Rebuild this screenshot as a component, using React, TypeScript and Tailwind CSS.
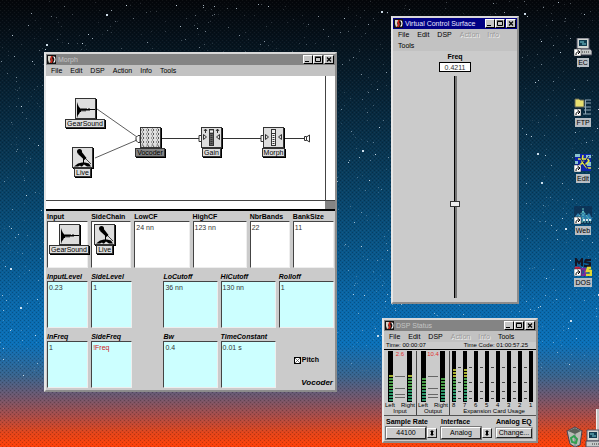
import { useState } from "react";
import type { ReactNode } from "react";

interface MenuItem {
  name: string;
  disabled?: boolean;
}

const morphMenu: MenuItem[] = [
  { name: "File" },
  { name: "Edit" },
  { name: "DSP" },
  { name: "Action" },
  { name: "Info" },
  { name: "Tools" },
];

const statusMenu: MenuItem[] = [
  { name: "File" },
  { name: "Edit" },
  { name: "DSP" },
  { name: "Action", disabled: true },
  { name: "Info", disabled: true },
  { name: "Tools" },
];

// Small seeded generator so the sky is the same on every load
function makeStars(count: number) {
  let seed = 4711;
  const next = () => {
    seed = (seed * 16807) % 2147483647;
    return seed / 2147483647;
  };
  return Array.from({ length: count }, () => {
    const x = next() * 100;
    const y = next() * 84;
    const bright = next();
    return { x, y, size: bright > 0.985 ? 2 : 1, opacity: 0.15 + bright * bright * bright * 0.8 };
  });
}

const stars = makeStars(1700);

function Sky() {
  return (
    <svg className="absolute inset-0 h-full w-full" aria-hidden="true" shapeRendering="crispEdges">
      <defs>
        <pattern id="dither" width="4" height="4" patternUnits="userSpaceOnUse">
          <path d="M0 0h1v1H0zM2 2h1v1H2z" fill="#000" opacity=".22" />
          <path d="M2 0h1v1H2zM0 2h1v1H0z" fill="#fff" opacity=".05" />
        </pattern>
      </defs>
      <rect width="100%" height="100%" fill="url(#dither)" />
      {stars.map((s, i) => (
        <rect key={i} x={`${s.x}%`} y={`${s.y}%`} width={s.size} height={s.size} fill="#d8e8f4" opacity={s.opacity} />
      ))}
    </svg>
  );
}

function AppIcon() {
  return (
    <svg width="9" height="9" viewBox="0 0 9 9" aria-hidden="true">
      <rect width="9" height="9" fill="#111" />
      <path d="M1 1h3v2l-1 1 1 3-2 1-1-3z" fill="#d8d4c8" />
      <path d="M4 1h2l-1 2 1 2-1 3H3l1-3-1-1z" fill="#c2281c" />
      <path d="M6.500 1.500c2 1 2 5 0 6" stroke="#fff" strokeWidth="1.200" fill="none" />
    </svg>
  );
}

function WindowButton({ label, children }: { label: string; children: ReactNode }) {
  return (
    <button
      type="button"
      aria-label={label}
      className="flex h-[9px] w-2.5 items-center justify-center border border-t-white border-l-white border-r-black border-b-black bg-[#c6c6c6]"
    >
      <svg width="8" height="7" viewBox="0 0 8 7" fill="none" stroke="#000" aria-hidden="true">
        {children}
      </svg>
    </button>
  );
}

function TitleBar({ title, active }: { title: string; active?: boolean }) {
  return (
    <header
      className={`flex h-[11px] items-center gap-0.5 px-px ${
        active ? "bg-[#000084] text-[#e8e8ff]" : "bg-[#848484] text-[#c4c4c4]"
      }`}
    >
      <AppIcon />
      <h2 className="flex-1 whitespace-nowrap text-[7px] leading-[11px]">{title}</h2>
      <div className="flex">
        <WindowButton label="Minimize">
          <path d="M1 5.500h4" />
        </WindowButton>
        <WindowButton label="Maximize">
          <path d="M1.500 1.500h5v4h-5zM1 1h6" />
        </WindowButton>
        <span className="w-px" />
        <WindowButton label="Close">
          <path d="M2 1.500l4 4M6 1.500l-4 4" strokeWidth="1.200" />
        </WindowButton>
      </div>
    </header>
  );
}

function MenuBar({ items }: { items: MenuItem[] }) {
  return (
    <nav className="flex flex-wrap gap-x-2 bg-[#c2c2c2] pl-[5px]">
      {items.map((item) => (
        <button
          key={item.name}
          type="button"
          disabled={item.disabled}
          className={`h-[11px] text-[7px] leading-[11px] ${
            item.disabled ? "text-[#9a9a9a] [text-shadow:1px_1px_0_#eeeeee]" : "text-black"
          }`}
        >
          {item.name}
        </button>
      ))}
    </nav>
  );
}

const frame =
  "absolute border-2 border-t-[#d8d8d8] border-l-[#e6e6e6] border-r-[#8c8c8c] border-b-[#8c8c8c] bg-[#cbcbcb]";

/* ---------- Sound glyphs ---------- */

function Glyph({ kind }: { kind: string }) {
  return (
    <svg width="21" height="21" viewBox="0 0 21 21" className="shadow-[1px_1px_0_#000]" aria-hidden="true">
      <rect x=".5" y=".5" width="20" height="20" fill="#dedede" stroke="#333" />
      {kind === "wave" && (
        <path
          d="M2 4l1 3 1 2 1 1 1 1 1-1 1 1 1-1 1 1 1-1 1 1 1 0 1-1 1 1h5v1h-5l-1 1-1-1-1 1-1-1-1 2-1-2-1 2-1-2-1 2-1 0-1 2-1 1-1 3z"
          fill="#000"
        />
      )}
      {kind === "mic" && (
        <g fill="#000">
          <circle cx="7.500" cy="4.500" r="2.500" />
          <path d="M6 7l3-3 5.500 7-2 2z" />
          <path d="M13 11l6 6" stroke="#000" strokeWidth=".700" />
          <path d="M11.500 11v5" stroke="#000" />
          <path d="M2 19.500l4-3 4-1h3l4 1 2 3h-4l-3-2-2 2H9l-1-1-2 1z" />
        </g>
      )}
      {kind === "bands" && (
        <g fill="none" stroke="#555">
          {[2, 7, 12, 17].map((x) => (
            <path key={x} d={`M${x} 1l2 2-2 2 2 2-2 2 2 2-2 2 2 2-2 2 2 3`} />
          ))}
          {[2, 7, 12, 17].map((x) => (
            <path key={x} d={`M${x + 1} 1l-2 2 2 2-2 2 2 2-2 2 2 2-2 2 2 2-2 3`} stroke="#999" />
          ))}
        </g>
      )}
      {(kind === "gain" || kind === "fader") && (
        <g fill="none" stroke="#333">
          <rect x="8.500" y="2.500" width="4" height="16" fill={kind === "gain" ? "#666" : "#f4f4f4"} />
          <path d="M9 4.500h3" stroke="#eee" strokeWidth="2" />
          <path d="M9 6.500h3" />
          <path d="M10.500 8v10" strokeDasharray="1 1" strokeWidth="2" />
          <path d="M2.500 7.500v5l3-2.500zM18.500 7.500v5l-3-2.500z" />
          {kind === "gain" && <path d="M4.500 6V2m-1.500 2l1.500-2L6 4M16.500 6V2M15 4l1.500-2L18 4" />}
        </g>
      )}
    </svg>
  );
}

function SoundNode({ kind, name, selected }: { kind: string; name: string; selected?: boolean }) {
  return (
    <figure className="flex flex-col items-center">
      <Glyph kind={kind} />
      <figcaption
        className={`h-[9px] border border-[#333] px-px text-[7px] leading-[7px] shadow-[1px_1px_0_#000] ${
          selected ? "bg-[#848484]" : "bg-[#dedede]"
        }`}
      >
        {name}
      </figcaption>
    </figure>
  );
}

const nodes = [
  { name: "GearSound", kind: "wave", place: "left-[20px] top-[22px] w-[38px]" },
  { name: "Live", kind: "mic", place: "left-[26px] top-[71px] w-[21px]" },
  { name: "Vocoder", kind: "bands", place: "left-[88px] top-[51px] w-[32px]", selected: true },
  { name: "Gain", kind: "gain", place: "left-[155px] top-[51px] w-[21px]" },
  { name: "Morph", kind: "fader", place: "left-[215px] top-[51px] w-[25px]" },
];

function SignalFlow() {
  return (
    <div className="relative h-full flex-1 bg-white">
      <svg width="278" height="124" className="absolute top-0 left-0" fill="none" stroke="#333" aria-hidden="true">
        <path d="M51 33L91 61M49 82L91 64" strokeWidth=".800" />
        <path d="M116 62.500h37M177 62.500h38M239 62.500h19" />
        <path d="M94 59.500h-2l-2 2v3l2 2h2zM155 59.500h-2v6h2M217 59.500h-2v6h2" />
        <path d="M258.500 60.500h2v4h-2zM260.500 61l3-2v7l-3-2" />
      </svg>
      {nodes.map((node) => (
        <div key={node.name} className={`absolute ${node.place}`}>
          <SoundNode kind={node.kind} name={node.name} selected={node.selected} />
        </div>
      ))}
    </div>
  );
}

/* ---------- Morph window ---------- */

interface FieldProps {
  name: string;
  value?: string;
  italic?: boolean;
  red?: boolean;
  children?: ReactNode;
}

const boxStyle =
  "block h-[47px] w-full border border-t-[#444] border-l-[#444] border-r-[#eee] border-b-[#eee]";

function Field({ name, value, italic, red, children }: FieldProps) {
  return (
    <div className="min-w-0">
      <label
        htmlFor={name}
        className={`block whitespace-nowrap text-[7px] leading-2 font-bold ${italic ? "italic" : ""}`}
      >
        {name}
      </label>
      {children ? (
        <div id={name} className={`${boxStyle} bg-white pt-0.5 pl-0.5`}>
          {children}
        </div>
      ) : (
        <textarea
          id={name}
          defaultValue={value}
          className={`${boxStyle} resize-none overflow-hidden pt-0.5 pl-px text-[7px] leading-2 outline-none ${
            italic ? "bg-[#ccffff]" : "bg-white"
          } ${red ? "text-[#d02020]" : "text-[#333]"}`}
        />
      )}
    </div>
  );
}

function MorphWindow() {
  return (
    <section className={`${frame} top-[52px] left-[44px] w-[293px]`}>
      <TitleBar title="Morph" />
      <MenuBar items={morphMenu} />
      <div className="flex h-[124px]">
        <SignalFlow />
        <div className="w-2.5 border-l border-[#444] bg-white" />
      </div>
      <div className="flex h-[9px] border-t border-[#444] bg-white">
        <div className="flex-1" />
        <div className="w-2.5 bg-[#848484]" />
      </div>
      <div className="h-0.5 bg-black" />

      <div className="flex flex-col gap-[5px] px-px py-0.5">
        <div className="grid grid-cols-[41fr_40fr_55fr_54fr_40fr_41fr] gap-[3px]">
          <Field name="Input">
            <div className="flex w-[38px] justify-center">
              <SoundNode kind="wave" name="GearSound" />
            </div>
          </Field>
          <Field name="SideChain">
            <div className="w-[21px]">
              <SoundNode kind="mic" name="Live" />
            </div>
          </Field>
          <Field name="LowCF" value="24 nn" />
          <Field name="HighCF" value="123 nn" />
          <Field name="NbrBands" value="22" />
          <Field name="BankSize" value="11" />
        </div>
        <div className="grid grid-cols-[41fr_41fr_25fr_54fr_55fr_55fr] gap-[3px]">
          <Field name="InputLevel" value="0.23" italic />
          <Field name="SideLevel" value="1" italic />
          <div />
          <Field name="LoCutoff" value="36 nn" italic />
          <Field name="HiCutoff" value="130 nn" italic />
          <Field name="Rolloff" value="1" italic />
        </div>
        <div className="grid grid-cols-[41fr_41fr_25fr_54fr_55fr_55fr] gap-[3px]">
          <Field name="InFreq" value="1" italic />
          <Field name="SideFreq" value="!Freq" italic red />
          <div />
          <Field name="Bw" value="0.4" italic />
          <Field name="TimeConstant" value="0.01 s" italic />
          <div className="flex flex-col justify-between pt-[23px]">
            <label className="flex items-center justify-center gap-px text-[7px] leading-2 font-bold">
              <span className="grid">
                <input
                  type="checkbox"
                  defaultChecked
                  className="peer col-start-1 row-start-1 size-[7px] appearance-none border border-black bg-white"
                />
                <svg
                  viewBox="0 0 7 7"
                  className="pointer-events-none invisible col-start-1 row-start-1 size-[7px] peer-checked:visible"
                  aria-hidden="true"
                >
                  <path d="M1 1l5 5M6 1L1 6" stroke="#444" strokeWidth=".700" />
                </svg>
              </span>
              Pitch
            </label>
            <p className="pr-px text-right text-[8px] leading-[10px] font-bold italic">Vocoder</p>
          </div>
        </div>
      </div>
    </section>
  );
}

/* ---------- Virtual Control Surface ---------- */

function ControlSurface() {
  const [freq, setFreq] = useState("0.4211");

  return (
    <section className={`${frame} top-[16px] left-[391px] w-[128px]`}>
      <TitleBar title="Virtual Control Surface" active />
      <MenuBar items={statusMenu} />
      <div className="flex flex-col items-center pt-px pb-1">
        <label htmlFor="freq-value" className="text-[7px] leading-[10px] font-bold">
          Freq
        </label>
        <input
          id="freq-value"
          value={freq}
          onChange={(e) => setFreq(e.target.value)}
          className="h-2.5 w-8 border border-black bg-white text-center text-[7px] leading-2 text-[#333] outline-none"
        />
        <input
          type="range"
          aria-label="Freq"
          min="0"
          max="1"
          step="0.0001"
          value={freq}
          onChange={(e) => setFreq(e.target.value)}
          className="mt-1 h-[222px] w-2.5 appearance-none bg-[linear-gradient(90deg,transparent_4px,#000_4px,#000_5px,#747474_5px,#747474_7px,transparent_7px)] [direction:rtl] [writing-mode:vertical-lr] [&::-webkit-slider-thumb]:h-1.5 [&::-webkit-slider-thumb]:w-2.5 [&::-webkit-slider-thumb]:appearance-none [&::-webkit-slider-thumb]:border [&::-webkit-slider-thumb]:border-[#333] [&::-webkit-slider-thumb]:bg-[#eeeeee]"
        />
      </div>
    </section>
  );
}

/* ---------- DSP Status ---------- */

function Meter({ x, level, width }: { x: number; level: number; width: number }) {
  const segments = Array.from({ length: Math.floor(level / 3) }, (_, i) => 48 - i * 3);
  return (
    <g>
      <rect x={x} width={width} height="51" fill="#000" />
      {segments.map((y) => (
        <rect key={y} x={x + 1} y={y} width={width - 1} height="2" fill={y < 27 ? "#a8b030" : y < 39 ? "#4a9c48" : "#2c9468"} />
      ))}
    </g>
  );
}

function LevelPanel({ name, peak, left, right }: { name: string; peak: string; left: number; right: number }) {
  return (
    <div className="w-[33px] border-r border-[#444] text-[6px]">
      <svg width="32" height="51" shapeRendering="crispEdges">
        <Meter x={4} level={left} width={5} />
        <Meter x={23} level={right} width={5} />
        <path d="M11 25.500h10M11 37.500h10M11 43.500h10M11 46.500h10" stroke="#666" />
        <text x="16" y="5" textAnchor="middle" fontSize="6" fill="#e03030">
          {peak}
        </text>
      </svg>
      <div className="flex justify-between px-px leading-[6px]">
        <span>Left</span>
        <span>Right</span>
      </div>
      <p className="text-center leading-[7px]">{name}</p>
    </div>
  );
}

const cards = [33, 33, 0, 0, 0, 0, 0, 0];

function Picker({ id, label, value }: { id: string; label: string; value: string }) {
  return (
    <div>
      <label htmlFor={id} className="block whitespace-nowrap text-[7px] leading-[10px] font-bold">
        {label}
      </label>
      <div className="flex items-center gap-px">
        <select
          id={id}
          className="h-3 w-10 appearance-none border border-t-white border-l-white border-r-[#222] border-b-[#222] bg-[#cbcbcb] text-center text-[7px] leading-[10px] shadow-[0_0_0_1px_#777] outline-none"
        >
          <option>{value}</option>
        </select>
        <span className="flex size-2.5 items-center justify-center border border-t-white border-l-white border-r-[#222] border-b-[#222]">
          <svg width="6" height="6" viewBox="0 0 6 6" aria-hidden="true">
            <path d="M3 0l2 2H4v2h1L3 6 1 4h1V2H1z" />
          </svg>
        </span>
      </div>
    </div>
  );
}

function StatusWindow() {
  return (
    <section className={`${frame} top-[318px] left-[382px] w-[156px]`}>
      <TitleBar title="DSP Status" />
      <MenuBar items={statusMenu} />
      <div className="flex h-2 justify-between border-b border-black pr-2 pl-0.5 text-[6px] leading-[7px]">
        <span>Time: 00:00:07</span>
        <span>Time Code: 01:00:57.25</span>
      </div>
      <div className="flex border-b border-[#555] pt-px">
        <LevelPanel name="Input" peak="2.6" left={27} right={27} />
        <LevelPanel name="Output" peak="10.4" left={24} right={24} />
        <div className="flex-1 text-[6px]">
          <svg width="86" height="51" shapeRendering="crispEdges">
            {cards.map((level, i) => (
              <Meter key={i} x={2 + i * 11} level={level} width={4} />
            ))}
            {cards.slice(1).map((_, i) => (
              <path
                key={i}
                d={`M${8 + i * 11} 16.500h3m-3 15h3m-3 9h3m-3 7h3`}
                stroke="#444"
              />
            ))}
          </svg>
          <div className="grid w-[88px] grid-cols-8 leading-[6px]">
            {cards.map((_, i) => (
              <span key={i} className="pl-0.5">
                {8 - i}
              </span>
            ))}
          </div>
          <p className="text-center leading-[7px]">Expansion Card Usage</p>
        </div>
      </div>
      <div className="flex pt-px pr-1 pb-0.5 pl-0.5">
        <div className="flex flex-1 gap-1">
          <Picker id="sample-rate" label="Sample Rate" value="44100" />
          <Picker id="interface" label="Interface" value="Analog" />
        </div>
        <div>
          <label htmlFor="analog-eq" className="block whitespace-nowrap text-[7px] leading-[10px] font-bold">
            Analog EQ
          </label>
          <button
            id="analog-eq"
            type="button"
            className="mx-auto mt-px block h-2.5 w-9 border border-t-white border-l-white border-r-[#222] border-b-[#222] text-[7px] leading-2 shadow-[0_0_0_1px_#999]"
          >
            Change...
          </button>
        </div>
      </div>
    </section>
  );
}

/* ---------- Desktop ---------- */

function Computer() {
  return (
    <g>
      <path d="M3 0h12v11H3z" fill="#d4d8d4" stroke="#556" />
      <path d="M5 2h8v6H5z" fill="#123c50" />
      <path d="M6 4h4M8 6h4" stroke="#7ad0d8" />
      <path d="M2 11h14l2 2v4H2z" fill="#c4c8c8" stroke="#445" />
      <path d="M8 14h8" stroke="#333" strokeDasharray="1 1" />
    </g>
  );
}

function Shortcut() {
  return (
    <g>
      <path d="M0 11h7v7H0z" fill="#fff" stroke="#222" strokeWidth=".500" />
      <path d="M2 17c0-3 1-3 3-3m-1.500-2L6 14l-2 2" fill="none" stroke="#000" />
    </g>
  );
}

const desktopItems = [
  { name: "EC", place: "top-[38px]", art: <Computer /> },
  {
    name: "FTP",
    place: "top-[98px]",
    art: (
      <g>
        <path d="M1 1h4l1 1h4v7H1z" fill="#e8e070" stroke="#665" />
        <path d="M11 2h6M12 5h5M10 9h7M10 12h7M9 16h8M11.500 2v14" stroke="#8ca4b4" />
      </g>
    ),
  },
  {
    name: "Edit",
    place: "top-[154px]",
    art: (
      <g>
        <path d="M1 0h16v17H1z" fill="#1024b0" />
        <path d="M1 0h5v3H1zM12 1h5v3h-5zM13 8h4v4h-4zM1 7h3v3H1z" fill="#8cc4d0" />
        <path d="M4 5h10M9 1L8 8l5 6M5 12l5-5M13 4l2 3-4 4M13 14h4" stroke="#e8e838" strokeWidth="1.500" fill="none" />
        <path d="M6 3l8 12M15 2l-5 7" stroke="#0a1070" />
      </g>
    ),
  },
  {
    name: "Web",
    place: "top-[206px]",
    art: (
      <g>
        <path d="M0 0h18v18H0z" fill="#0c3458" />
        <path d="M0 12L4 7l3 3 2-7 3 7 3-3 3 5v3H0z" fill="#2c7cac" />
        <path d="M9 2v14M3 13l6-8 6 8M1 16h16" stroke="#68c4bc" fill="none" strokeDasharray="2 1" />
        <path d="M9 14h8" stroke="#d4e4e8" strokeWidth="2" strokeDasharray="2 1" />
      </g>
    ),
  },
  {
    name: "DOS",
    place: "top-[258px]",
    art: (
      <g fill="none" strokeWidth="2.500">
        <path d="M2 8V1l3 4 3-4v7" stroke="#151525" strokeWidth="2" />
        <path d="M17 2h-5l-1 2 5 1v3h-6" stroke="#151525" strokeWidth="2" />
        <path d="M2 10h3l2 3-2 4H2z" stroke="#c8203c" />
        <path d="M7 11h4v6H7z" stroke="#7c2c98" />
        <path d="M17 10h-3l-1 3h4v4h-5" stroke="#e4d830" />
      </g>
    ),
  },
];

export default function App() {
  return (
    <main className="relative min-h-screen w-full overflow-hidden bg-[linear-gradient(180deg,#04060a_0%,#061a28_15%,#083754_35%,#08507e_52%,#0968aa_68%,#0a70b8_77%,#38648e_84%,#72566c_89%,#a84c48_93%,#e44418_97%,#ff4008_100%)] font-['Liberation_Sans',Arial,sans-serif] text-black">
      <Sky />
      <MorphWindow />
      <ControlSurface />
      <StatusWindow />

      {desktopItems.map((item) => (
        <a
          key={item.name}
          href="#"
          className={`absolute right-1.5 flex w-[20px] flex-col items-center gap-0.5 text-[7px] leading-[9px] ${item.place}`}
        >
          <svg width="18" height="18" viewBox="0 0 18 18" aria-hidden="true">
            {item.art}
            <Shortcut />
          </svg>
          <span className="bg-[#b8bec4] px-px">{item.name}</span>
        </a>
      ))}

      {/* Recycle bin and the edge of the tray */}
      <svg width="34" height="38" className="absolute right-0 bottom-0" aria-hidden="true">
        <path d="M2 22l8-4 7 4-2 14-5 2-5-3z" fill="#b8bcb4" stroke="#445" />
        <path d="M3 22l7 3 6-3-6-3z" fill="#586058" />
        <path d="M10 25v13" stroke="#778" />
        <path d="M6 29l3-2 3 3-1 4-4-1z" fill="none" stroke="#30a050" strokeWidth="2" />
        <path d="M31 0h3v38h-3z" fill="#c6c6c6" />
        <path d="M31.500 0v38" stroke="#f0f0f0" />
        <g transform="translate(19 21)">
          <Computer />
        </g>
      </svg>
    </main>
  );
}
